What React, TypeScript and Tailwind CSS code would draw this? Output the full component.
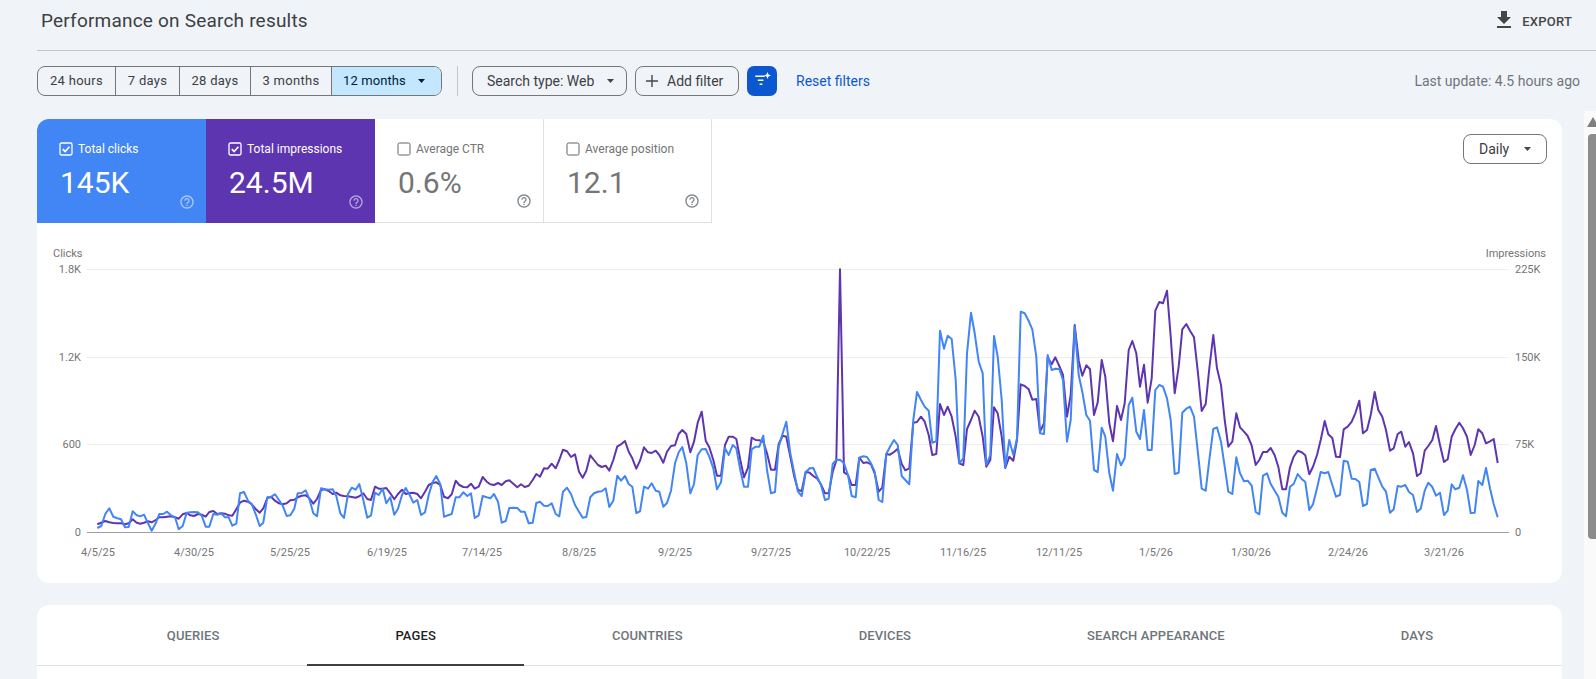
import React from "react";

const FONT = "font-['Roboto','Liberation_Sans',sans-serif]";

// chart points read off the picture in 3x crops: "x,y x,y ..." plus the crop's left edge
function crop(left: number, data: string) {
  return data
    .trim()
    .split(/\s+/)
    .map((p) => {
      const [x, y] = p.split(",").map(Number);
      return `${(x / 3 + left).toFixed(1)},${(y / 3 + 240).toFixed(1)}`;
    })
    .join(" ");
}

const BLUE = [
  crop(40, "172,864 184,858 196,822 208,805 220,830 232,835 243,838 255,862 266,861 278,814 290,826 301,829 312,824 324,850 335,872 347,850 358,822 370,822 381,815 393,826 405,832 416,868 428,858 440,818 451,817 462,816 474,817 485,827 497,860 508,860 520,822 532,824 543,820 555,832 566,832 577,857 589,851 600,760 612,756 624,782 635,792 648,825 659,858 670,848 682,772 694,770 705,763 717,780 728,797 740,828 751,826 763,806 773,760 785,759 797,751 808,776 820,820 831,829 843,745 855,748 866,749 878,748 889,768 901,820 912,834 924,762 935,743 947,749 958,732 970,780 982,833 993,826 1005,758 1016,765 1028,746 1039,790 1051,772 1063,824 1074,806 1086,765 1097,744 1109,765 1120,788 1132,780 1143,825 1155,817 1166,765 1178,725 1189,708 1201,733 1212,830 1224,826 1235,822 1247,772 1258,772"),
  crop(440, "70,757 82,768 93,760 104,834 116,826 128,768 140,772 151,775 162,762 174,785 185,848 197,843 208,804 220,803 232,804 243,815 254,815 266,850 278,848 289,789 300,785 312,797 323,798 335,790 347,822 358,829 369,755 381,743 393,762 405,795 417,815 428,833 439,831 451,772 462,760 474,755 485,754 497,745 508,801 520,782 532,707 543,722 555,708 566,732 577,740 589,819 600,814 612,740 624,746 635,730 647,752 658,755 670,800 681,789 693,752 705,670 716,637 727,621 739,670 751,760 762,732 773,645 785,628 797,627 808,650 820,685 831,748 843,727 855,625 866,645 878,615 889,625 901,690 912,740 924,740 935,628 947,620 958,620 970,587 981,690 993,760 1005,756 1016,620 1028,580 1039,545 1051,640 1063,700 1074,755 1085,768 1097,697 1109,685 1120,684 1132,712 1143,735 1155,780 1166,776 1178,672 1189,660 1200,659 1212,670 1224,705 1235,768 1247,772 1258,653"),
  crop(840, "70,649 81,651 93,670 104,695 116,780 127,786 139,642 150,620 162,600 173,615 185,708 196,720 208,733 220,540 231,456 243,480 254,500 266,512 277,608 289,604 300,272 312,326 323,287 335,297 347,420 358,670 370,655 381,340 393,218 404,280 416,365 428,400 439,675 451,645 462,288 473,350 485,480 496,682 508,600 520,645 531,595 542,215 554,220 566,243 577,268 589,350 600,580 612,582 623,345 635,390 646,386 658,387 669,420 681,605 692,540 704,260 716,405 727,455 739,525 750,542 762,690 773,696 785,563 796,590 808,700 819,752 831,642 843,676 854,654 866,495 877,473 889,575 900,597 912,510 923,630 935,630 946,450 958,435 969,440 981,475 992,540 1004,702 1016,698 1027,518 1039,506 1050,500 1062,530 1074,640 1085,746 1097,752 1108,660 1120,567 1131,562 1143,605 1154,680 1165,755 1177,762 1189,652 1200,700"),
  crop(1200, "132,724 143,722 155,737 167,816 178,823 189,707 201,700 212,732 224,752 235,770 247,818 258,829 270,740 281,732 293,702 305,717 316,726 328,810 339,793 351,745 362,696 374,700 385,696 397,735 408,770 420,765 431,662 443,665 455,716 466,717 478,726 489,798 501,792 512,690 524,686 535,712 547,740 558,755 570,818 581,808 593,738 604,740 616,735 627,756 639,765 651,816 662,806 674,752 685,728 697,741 708,767 720,758 732,825 743,812 755,733 766,748 778,743 789,706 801,750 812,819 824,818 835,723 847,735 858,684 870,745 881,792 893,832"),
].join(" ");

const PURPLE = [
  crop(40, "172,853 184,848 196,843 208,847 220,849 232,850 243,850 255,853 266,850 278,838 290,848 301,851 312,848 324,844 335,847 347,840 358,832 370,832 381,830 393,829 405,832 416,836 428,823 440,819 451,826 462,828 474,822 485,824 497,830 508,816 520,813 532,822 543,820 555,821 566,826 577,827 589,808 600,788 612,782 624,785 635,793 648,808 659,818 670,805 682,774 694,771 705,782 717,790 728,793 740,790 751,781 763,779 773,772 785,767 797,766 808,775 820,791 831,777 843,750 855,748 866,753 878,762 889,758 901,766 912,768 924,769 935,771 947,773 958,769 970,760 982,777 993,780 1005,740 1016,746 1028,746 1039,744 1051,760 1063,778 1074,762 1086,749 1097,762 1109,759 1120,758 1132,762 1143,775 1155,755 1166,735 1178,729 1189,727 1201,735 1212,770 1224,775 1235,763 1247,722 1258,735"),
  crop(440, "70,741 82,742 93,731 104,746 116,740 128,711 140,725 151,733 162,735 174,729 185,735 197,724 208,721 220,731 232,742 243,733 254,741 266,737 278,720 289,702 300,710 312,685 323,686 335,671 347,685 358,660 369,629 381,634 393,651 405,643 417,695 428,713 439,692 451,646 462,660 474,675 485,681 497,677 508,692 520,660 532,619 543,613 555,603 566,635 577,655 589,686 600,662 612,622 624,637 635,639 647,632 658,645 670,668 681,635 693,618 705,616 716,582 727,570 739,582 751,637 762,605 773,548 785,515 797,602 808,622 820,660 831,707 843,707 855,615 866,590 878,590 889,597 901,660 912,712 924,683 935,593 947,600 958,601 970,605 981,640 993,689 1005,689 1016,612 1028,587 1039,590 1051,650 1063,710 1074,750 1085,753 1097,695 1109,698 1120,708 1132,716 1143,733 1155,760 1166,760 1178,695 1189,662 1200,88 1212,697 1224,705 1235,735 1247,735 1258,653"),
  crop(840, "70,669 81,667 93,673 104,700 116,755 127,743 139,642 150,644 162,636 173,626 185,672 196,691 208,685 220,548 231,546 243,530 254,545 266,585 277,645 289,642 300,492 312,525 323,500 335,530 347,590 358,670 370,675 381,567 393,540 404,512 416,530 428,590 439,680 451,660 462,502 473,520 485,590 496,684 508,650 520,662 531,600 542,433 554,438 566,448 577,479 589,477 600,575 612,550 623,352 635,373 646,352 658,378 669,405 681,530 692,465 704,255 716,362 727,407 739,376 750,388 762,525 773,487 785,360 796,410 808,550 819,604 831,498 843,540 854,490 866,330 877,303 889,340 900,440 912,374 923,488 935,415 946,212 958,186 969,190 981,152 992,290 1004,460 1016,380 1027,268 1039,252 1050,272 1062,292 1074,400 1085,513 1097,492 1108,385 1120,285 1131,385 1143,435 1154,540 1165,620 1177,605 1189,520 1200,562"),
  crop(1200, "132,575 143,588 155,617 167,675 178,660 189,636 201,636 212,624 224,646 235,680 247,748 258,748 270,682 281,650 293,632 305,637 316,646 328,703 339,680 351,645 362,600 374,543 385,583 397,594 408,650 420,651 431,568 443,560 455,545 466,520 478,482 489,580 501,570 512,525 524,456 535,510 547,530 558,570 570,632 581,625 593,582 604,575 616,620 627,606 639,640 651,708 662,700 674,632 685,618 697,600 708,558 720,615 732,666 743,658 755,590 766,568 778,548 789,565 801,590 812,645 824,615 835,568 847,580 858,610 870,604 881,597 893,669"),
].join(" ");

const GRID = [
  { y: 269.5, left: "1.8K", right: "225K" },
  { y: 357.5, left: "1.2K", right: "150K" },
  { y: 444.5, left: "600", right: "75K" },
];

const DATES: [string, number][] = [
  ["4/5/25", 98], ["4/30/25", 194], ["5/25/25", 290], ["6/19/25", 387], ["7/14/25", 482],
  ["8/8/25", 579], ["9/2/25", 675], ["9/27/25", 771], ["10/22/25", 867], ["11/16/25", 963],
  ["12/11/25", 1059], ["1/5/26", 1156], ["1/30/26", 1251], ["2/24/26", 1348], ["3/21/26", 1444],
];

function Caret({ className = "text-[#444746]" }: { className?: string }) {
  return (
    <svg width="7" height="4" viewBox="0 0 7 4" className={className}>
      <path d="M0 0h7L3.5 4z" fill="currentColor" />
    </svg>
  );
}

function Help({ className }: { className: string }) {
  return (
    <svg width="16" height="16" viewBox="0 0 24 24" fill="currentColor" className={`absolute right-[11px] bottom-[13px] ${className}`}>
      <path d="M11 18h2v-2h-2v2zm1-16C6.48 2 2 6.48 2 12s4.48 10 10 10 10-4.48 10-10S17.52 2 12 2zm0 18c-4.41 0-8-3.59-8-8s3.59-8 8-8 8 3.59 8 8-3.59 8-8 8zm0-14c-2.21 0-4 1.79-4 4h2c0-1.1.9-2 2-2s2 .9 2 2c0 2-3 1.75-3 5h2c0-2.25 3-2.5 3-5 0-2.21-1.79-4-4-4z" />
    </svg>
  );
}

function Tile({ label, value, checked, className }: { label: string; value: string; checked?: boolean; className: string }) {
  return (
    <div className={`relative h-[104px] pl-[22px] pt-[23px] shrink-0 ${className}`}>
      <div className="flex items-center gap-[5px] h-[14px]">
        {checked ? (
          <svg width="14" height="14" viewBox="0 0 14 14" fill="none" stroke="currentColor">
            <rect x="1" y="1" width="12" height="12" rx="1.5" strokeWidth="1.3" />
            <path d="M3.8 7.2l2.3 2.3L10.4 4.8" strokeWidth="1.7" />
          </svg>
        ) : (
          <svg width="14" height="14" viewBox="0 0 14 14" fill="none" stroke="#5f6368">
            <rect x="1" y="1" width="12" height="12" rx="1.5" strokeWidth="1" />
          </svg>
        )}
        <span className="text-[12px] leading-[14px]">{label}</span>
      </div>
      <div className="mt-[9px] ml-[1px] text-[30px] leading-[36px]">{value}</div>
      <Help className={checked ? "text-white/55" : "text-[#80868b]"} />
    </div>
  );
}

const chip = "h-[30px] flex items-center border border-[#747775] rounded-[8px] text-[#3c4043]";

export default function App() {
  return (
    <div className={`relative h-[679px] overflow-hidden bg-[#f0f4f9] ${FONT}`}>
      <header className="ml-[37px] h-[51px] pl-[4px] pr-[24px] pb-[7px] flex items-center justify-between border-b border-[#c4c7c5]">
        <h1 className="text-[19px] font-normal text-[#3c4043] tracking-[0.2px]">Performance on Search results</h1>
        <div className="flex items-center gap-[6px] text-[13px] font-medium text-[#444746] tracking-[0.2px]">
          <svg width="24" height="24" viewBox="0 0 24 24" fill="#444746" className="-mt-[3px]">
            <path d="M19 9h-4V3H9v6H5l7 7 7-7zM5 18v2h14v-2H5z" />
          </svg>
          EXPORT
        </div>
      </header>

      <div className="ml-[37px] mr-[16px] mt-[15px] h-[30px] flex items-center">
        <div className={`${chip} overflow-hidden text-[13px] tracking-[0.3px]`}>
          <div className="w-[78px] h-full flex items-center justify-center border-r border-[#747775]">24 hours</div>
          <div className="w-[64px] h-full flex items-center justify-center border-r border-[#747775]">7 days</div>
          <div className="w-[71px] h-full flex items-center justify-center border-r border-[#747775]">28 days</div>
          <div className="w-[81px] h-full flex items-center justify-center border-r border-[#747775]">3 months</div>
          <div className="w-[109px] h-full flex items-center gap-[12px] pl-[11px] bg-[#c2e7ff] text-[#001d35] tracking-[0.1px]">
            12 months
            <Caret className="text-[#001d35]" />
          </div>
        </div>
        <div className="ml-[15px] w-px h-[30px] bg-[#c4c7c5]" />
        <div className={`${chip} ml-[14px] w-[155px] pl-[14px] gap-[13px] text-[14px]`}>
          Search type: Web
          <Caret />
        </div>
        <div className={`${chip} ml-[8px] w-[104px] pl-[9px] gap-[8px] text-[14px]`}>
          <svg width="14" height="14" viewBox="0 0 14 14" fill="none" stroke="#444746" strokeWidth="1.4">
            <path d="M7 1v12M1 7h12" />
          </svg>
          Add filter
        </div>
        <div className="ml-[8px] w-[30px] h-[30px] rounded-[7px] bg-[#0b57d0] flex items-center justify-center">
          <svg width="20" height="20" viewBox="0 0 20 20" fill="white">
            <path d="M3.3 4.5h9.4v1.4H3.3zM5.8 8.5h5.6v1.4H5.8zM7.6 12.5h2.8v1.4H7.6z" />
            <path d="M15.5 1l1 2.5 2.5 1-2.5 1-1 2.5-1-2.5-2.5-1 2.5-1z" />
          </svg>
        </div>
        <span className="ml-[19px] text-[14px] text-[#0b57d0]">Reset filters</span>
        <span className="ml-auto text-[14px] text-[#70757a]">Last update: 4.5 hours ago</span>
      </div>

      <section className="ml-[37px] mr-[34px] mt-[23px] h-[464px] bg-white rounded-[12px] overflow-hidden">
        <div className="relative flex h-[104px]">
          <Tile label="Total clicks" value="145K" checked className="w-[169px] bg-[#4285f4] text-white" />
          <Tile label="Total impressions" value="24.5M" checked className="w-[169px] bg-[#5e35b1] text-white" />
          <Tile label="Average CTR" value="0.6%" className="w-[169px] text-[#757575] border-r border-b border-[#e0e0e0]" />
          <Tile label="Average position" value="12.1" className="w-[168px] text-[#757575] border-r border-b border-[#e0e0e0]" />
          <div className="ml-auto mr-[15px] mt-[15px] h-[30px] w-[84px] flex items-center gap-[15px] pl-[15px] border border-[#747775] rounded-[8px] text-[14px] text-[#3c4043]">
            Daily
            <Caret />
          </div>
        </div>
        <svg width="1525" height="360" viewBox="37 223 1525 360" className="block">
          <g fontSize="11" fill="#757575">
            <text x="53" y="257">Clicks</text>
            <text x="1546" y="257" textAnchor="end">Impressions</text>
            {GRID.map((g) => (
              <g key={g.left}>
                <line x1="87" x2="1509" y1={g.y} y2={g.y} stroke="#eeeeee" />
                <text x="81" y={g.y + 3.5} textAnchor="end">{g.left}</text>
                <text x="1515" y={g.y + 3.5}>{g.right}</text>
              </g>
            ))}
            <line x1="87" x2="1509" y1="532.5" y2="532.5" stroke="#9e9e9e" />
            <text x="81" y="536" textAnchor="end">0</text>
            <text x="1515" y="536">0</text>
            {DATES.map(([d, x]) => (
              <text key={d} x={x} y="556" textAnchor="middle">{d}</text>
            ))}
          </g>
          <polyline points={PURPLE} fill="none" stroke="#5e35b1" strokeWidth="2" strokeLinejoin="round" />
          <polyline points={BLUE} fill="none" stroke="#4285f4" strokeWidth="2" strokeLinejoin="round" />
        </svg>
      </section>

      <section className="ml-[37px] mr-[34px] mt-[22px] h-[200px] bg-white rounded-t-[12px]">
        <div className="flex justify-center h-[61px] pt-[1px] pl-[1px] border-b border-[#e0e0e0] text-[13px] font-medium tracking-[0.1px] text-[#70757a]">
          <div className="px-[88px] flex items-center">QUERIES</div>
          <div className="relative px-[88px] flex items-center text-[#1f1f1f]">
            PAGES
            <div className="absolute left-0 right-0 -bottom-px h-[2px] bg-[#3c4043]" />
          </div>
          <div className="px-[88px] flex items-center">COUNTRIES</div>
          <div className="px-[88px] flex items-center">DEVICES</div>
          <div className="px-[88px] flex items-center">SEARCH APPEARANCE</div>
          <div className="px-[88px] flex items-center">DAYS</div>
        </div>
      </section>

      <div className="absolute top-[111px] right-0 bottom-0 w-[12px] bg-[#fafafa] overflow-hidden">
        <div className="absolute top-[6px] -right-[3px] w-0 h-0 border-x-[6px] border-x-transparent border-b-[10px] border-b-[#808080]" />
        <div className="absolute top-[23px] right-0 w-[8px] h-[405px] rounded-l-[4px] bg-[#8c8c8c]" />
      </div>
    </div>
  );
}
